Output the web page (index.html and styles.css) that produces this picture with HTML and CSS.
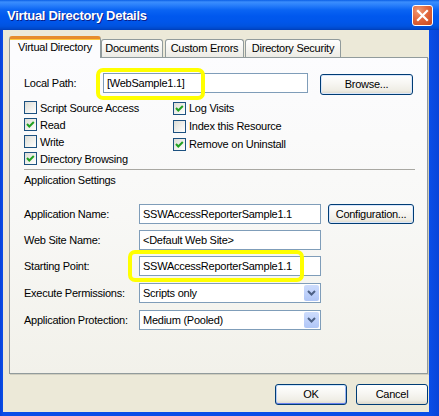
FILE: index.html
```html
<!DOCTYPE html>
<html>
<head>
<meta charset="utf-8">
<title>Virtual Directory Details</title>
<link rel="stylesheet" href="styles.css">
</head>
<body>
<div class="window">
  <div class="titlebar">
    <span class="title">Virtual Directory Details</span>
    <div class="close">
      <svg width="19" height="19" viewBox="0 0 19 19"><path d="M5 5 L14 14 M14 5 L5 14" stroke="#fff" stroke-width="2.2" stroke-linecap="square"/></svg>
    </div>
  </div>
  <div class="client">
    <div class="tabs">
      <div class="tab active">Virtual Directory</div>
      <div class="tab t-docs">Documents</div>
      <div class="tab t-errors">Custom Errors</div>
      <div class="tab t-sec">Directory Security</div>
    </div>
    <div class="panel">
      <div class="path-row">
        <span class="path-lbl">Local Path:</span>
        <div class="input path-input">[WebSample1.1]</div>
        <div class="btn browse">Browse...</div>
      </div>
      <div class="checks">
        <div class="col col-left">
          <div class="chk"><span class="box"></span>Script Source Access</div>
          <div class="chk"><span class="box"><svg width="11" height="11" viewBox="0 0 11 11"><polyline points="2,5 4.3,7.5 8.8,3" fill="none" stroke="#21a121" stroke-width="2"/></svg></span>Read</div>
          <div class="chk"><span class="box"></span>Write</div>
          <div class="chk"><span class="box"><svg width="11" height="11" viewBox="0 0 11 11"><polyline points="2,5 4.3,7.5 8.8,3" fill="none" stroke="#21a121" stroke-width="2"/></svg></span>Directory Browsing</div>
        </div>
        <div class="col col-right">
          <div class="chk"><span class="box"><svg width="11" height="11" viewBox="0 0 11 11"><polyline points="2,5 4.3,7.5 8.8,3" fill="none" stroke="#21a121" stroke-width="2"/></svg></span>Log Visits</div>
          <div class="chk"><span class="box"></span>Index this Resource</div>
          <div class="chk"><span class="box"><svg width="11" height="11" viewBox="0 0 11 11"><polyline points="2,5 4.3,7.5 8.8,3" fill="none" stroke="#21a121" stroke-width="2"/></svg></span>Remove on Uninstall</div>
        </div>
      </div>
      <div class="sep"></div>
      <div class="section-title">Application Settings</div>
      <div class="form">
        <div class="frow">
          <span class="flbl">Application Name:</span>
          <div class="input fctl">SSWAccessReporterSample1.1</div>
          <div class="btn config">Configuration...</div>
        </div>
        <div class="frow">
          <span class="flbl">Web Site Name:</span>
          <div class="input fctl">&lt;Default Web Site&gt;</div>
        </div>
        <div class="frow">
          <span class="flbl">Starting Point:</span>
          <div class="input fctl">SSWAccessReporterSample1.1</div>
        </div>
        <div class="frow frow-sel">
          <span class="flbl">Execute Permissions:</span>
          <div class="input fctl select"><span class="sel-text">Scripts only</span><span class="arrow"><svg width="9" height="6" viewBox="0 0 9 6"><polyline points="1,1 4.5,4.5 8,1" fill="none" stroke="#4d6185" stroke-width="2"/></svg></span></div>
        </div>
        <div class="frow frow-sel">
          <span class="flbl">Application Protection:</span>
          <div class="input fctl select"><span class="sel-text">Medium (Pooled)</span><span class="arrow"><svg width="9" height="6" viewBox="0 0 9 6"><polyline points="1,1 4.5,4.5 8,1" fill="none" stroke="#4d6185" stroke-width="2"/></svg></span></div>
        </div>
      </div>
      <div class="hl hl-path"></div>
      <div class="hl hl-start"></div>
    </div>
    <div class="footer">
      <div class="btn fbtn default">OK</div>
      <div class="btn fbtn">Cancel</div>
    </div>
  </div>
</div>
</body>
</html>
```
FILE: styles.css
```css
html, body {
  margin: 0;
  padding: 0;
  background: #ffffff;
}
body {
  font-family: Tahoma, "Liberation Sans", Arial, sans-serif;
  font-size: 11px;
  letter-spacing: -0.25px;
  color: #000;
}
.window {
  width: 439px;
  height: 416px;
  display: flex;
  flex-direction: column;
  background: linear-gradient(to right, #0842d8 0px, #0a4ee8 3px, #0a4ee8 429px, #0845d9 439px);
  box-sizing: border-box;
}
.titlebar {
  height: 30px;
  flex: none;
  display: flex;
  align-items: center;
  justify-content: space-between;
  padding: 0 6px 0 7px;
  background: linear-gradient(to bottom, #0a5fe6 0px, #3b8efd 2px, #2a80fb 5px, #0a64f3 10px, #0058ee 16px, #0056ea 22px, #0053e0 26px, #0047c8 29px, #003cb4 30px);
  box-sizing: border-box;
}
.title {
  color: #fff;
  font-family: "Trebuchet MS", "Liberation Sans", Arial, sans-serif;
  font-weight: bold;
  font-size: 13px;
  letter-spacing: -0.3px;
  text-shadow: 1px 1px 0 #0a1e8a;
  margin-top: 1px;
}
.close {
  width: 21px;
  height: 21px;
  box-sizing: border-box;
  border: 1px solid #ffffff;
  border-radius: 3px;
  background: radial-gradient(circle at 30% 25%, #f09a74 0%, #e2683e 45%, #c9461c 100%);
  display: flex;
  align-items: center;
  justify-content: center;
}
.client {
  flex: 1;
  margin: 0 10px 4px 3px;
  background: #ece9d8;
  padding: 6px 1px 0 6px;
  display: flex;
  flex-direction: column;
}
.tabs {
  height: 21px;
  display: flex;
  align-items: flex-end;
  flex: none;
}
.tab {
  box-sizing: border-box;
  height: 18px;
  border: 1px solid #919b9c;
  border-bottom: none;
  border-radius: 3px 3px 0 0;
  background: linear-gradient(to bottom, #ffffff 0%, #f6f5f1 50%, #ecebe5 100%);
  text-align: center;
  line-height: 16px;
  white-space: nowrap;
}
.tab.active {
  width: 92px;
  height: 22px;
  margin-bottom: -1px;
  position: relative;
  z-index: 1;
  border-top: 3px solid #e68b2c;
  box-shadow: inset 0 1px 0 #ffc73c;
  background: #fcfcfe;
  line-height: 17px;
}
.t-docs { width: 62px; }
.t-errors { width: 79px; margin-left: 2px; }
.t-sec { width: 96px; margin-left: 1px; }
.panel {
  position: relative;
  width: 419px;
  height: 317px;
  box-sizing: border-box;
  border: 1px solid #919b9c;
  box-shadow: 1px 1px 0 #d0cebf;
  background: linear-gradient(to bottom, #fcfcfe 0%, #f8f8f6 50%, #f2f1ea 100%);
  padding: 15px 0 0 14px;
  flex: none;
}
.input {
  box-sizing: border-box;
  height: 20px;
  border: 1px solid #7f9db9;
  background: #ffffff;
  line-height: 18px;
  padding-left: 3px;
  white-space: nowrap;
  overflow: hidden;
}
.path-row {
  display: flex;
  align-items: flex-start;
  height: 22px;
}
.path-lbl {
  width: 79px;
  line-height: 20px;
}
.path-input {
  width: 205px;
}
.btn {
  box-sizing: border-box;
  border: 1px solid #003c74;
  border-radius: 3px;
  background: linear-gradient(to bottom, #ffffff 0%, #f7f6f2 45%, #efede5 80%, #dcd8cb 100%);
  text-align: center;
  white-space: nowrap;
}
.browse {
  width: 93px;
  height: 21px;
  line-height: 19px;
  margin-left: 12px;
  margin-top: 1px;
  box-shadow: inset 0 0 0 1px #d8e6fb;
}
.checks {
  display: flex;
  margin-top: 4px;
}
.col-left {
  width: 149px;
}
.chk {
  display: flex;
  align-items: center;
  height: 17px;
  white-space: nowrap;
}
.col-right .chk {
  height: 18px;
}
.box {
  width: 13px;
  height: 13px;
  box-sizing: border-box;
  border: 1px solid #1c5180;
  background: linear-gradient(135deg, #dcdcd5 0%, #f0f0ec 55%, #ffffff 100%);
  margin-right: 3px;
  display: flex;
  align-items: center;
  justify-content: center;
  flex: none;
}
.sep {
  margin-top: 2px;
  width: 391px;
  height: 1px;
  background: #a9a8a2;
}
.section-title {
  margin-top: 3px;
  line-height: 14px;
}
.form {
  margin-top: 17px;
}
.frow {
  display: flex;
  align-items: center;
  height: 20px;
  margin-top: 6px;
}
.frow:first-child {
  margin-top: 0;
}
.frow-sel {
  margin-top: 7px;
}
.flbl {
  width: 115px;
  line-height: 20px;
  white-space: nowrap;
}
.fctl {
  width: 182px;
}
.config {
  width: 86px;
  height: 20px;
  line-height: 18px;
  margin-left: 7px;
  box-shadow: inset 0 0 0 1px #d8e6fb;
}
.select {
  display: flex;
  align-items: center;
  padding-right: 1px;
}
.sel-text {
  flex: 1;
}
.arrow {
  width: 15px;
  height: 16px;
  border-radius: 2px;
  background: linear-gradient(to bottom, #cddcfc 0%, #bccffa 60%, #b0c6f6 100%);
  display: flex;
  align-items: center;
  justify-content: center;
}
.hl {
  position: absolute;
  box-sizing: border-box;
  border: 4px solid #ffff00;
  border-radius: 7px;
  pointer-events: none;
}
.hl-path {
  left: 86px;
  top: 10px;
  width: 109px;
  height: 32px;
}
.hl-start {
  left: 118px;
  top: 192px;
  width: 176px;
  height: 32px;
}
.footer {
  display: flex;
  justify-content: flex-end;
  gap: 9px;
  margin-top: 10px;
}
.fbtn {
  width: 72px;
  height: 21px;
  line-height: 19px;
}
.default {
  box-shadow: inset 0 1px 0 #cee7ff, inset 0 -1px 0 #6982ee, inset 1px 0 0 #b4ccf5, inset -1px 0 0 #9bb4f2;
}
```
